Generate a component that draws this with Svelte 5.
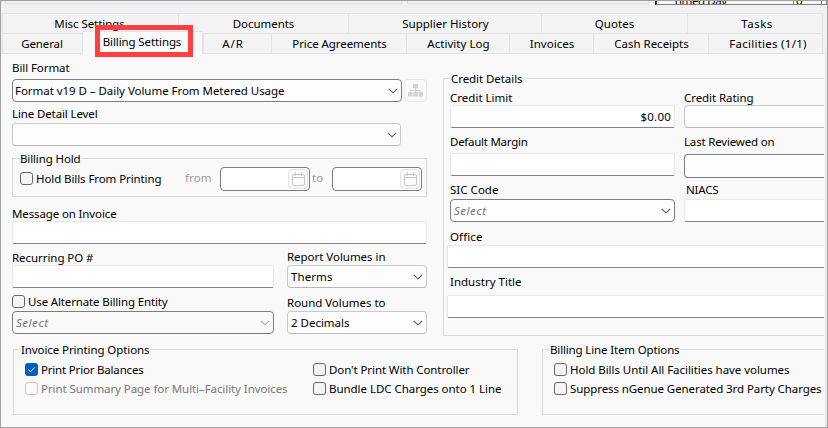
<script>
  const topTabs = [
    { text: 'Misc Settings', tw: 70, w: 176, shr: 2 },
    { text: 'Documents', tw: 61, w: 170 },
    { text: 'Supplier History', tw: 86, w: 193, shift: 1 },
    { text: 'Quotes', tw: 39, w: 146 },
    { text: 'Tasks', tw: 31, w: 136, shift: 4 }
  ];
  const tabs = [
    { text: 'General', tw: 41, w: 80, shr: 1 },
    { text: 'Billing Settings', tw: 78, w: 121, shr: 1, active: true },
    { text: 'A/R', tw: 21, w: 68, shr: 9 },
    { text: 'Price Agreements', tw: 94, w: 135, shift: 1 },
    { text: 'Activity Log', tw: 62, w: 103, shift: 1 },
    { text: 'Invoices', tw: 44, w: 84, shift: 1 },
    { text: 'Cash Receipts', tw: 74, w: 115, shift: 1 },
    { text: 'Facilities (1/1)', tw: 77, w: 115, shift: 5 }
  ];

  // Spreads the letters of a caption over a given width.
  function fit(node, width) {
    const natural = node.getBoundingClientRect().width;
    const spacing = (width + 0.5 - natural) / node.textContent.length;
    node.style.letterSpacing = spacing.toFixed(3) + 'px';
  }
</script>

{#snippet t(text, w)}<span class="t" use:fit={w}>{text}</span>{/snippet}

{#snippet chevron()}
  <svg class="chev" width="10" height="6" viewBox="0 0 10 6"><path d="M0.8 0.8 L5 4.8 L9.2 0.8" /></svg>
{/snippet}

{#snippet check(text, w, on = false, disabled = false)}
  <div class="check" class:disabled>
    <span class="box" class:on>
      {#if on}<svg width="13" height="13" viewBox="0 0 13 13"><path d="M3.3 6.7 L5.5 8.8 L9.8 4.4" /></svg>{/if}
    </span>
    {@render t(text, w)}
  </div>
{/snippet}

{#snippet date()}
  <div class="date">
    <span class="calbtn">
      <svg width="15" height="15" viewBox="0 0 15 15">
        <rect x="1.5" y="2.5" width="12" height="11" rx="1.5" />
        <path d="M1.5 5.5 H13.5 M4.5 0.5 V4 M10.5 0.5 V4" />
      </svg>
    </span>
  </div>
{/snippet}

<div class="window">
  <div class="strip">
    <div class="pane first"></div>
    <div class="pane second"></div>
    <div class="cut"><span class="cutlabel">Timed Day</span><span class="cutvalue">0</span></div>
  </div>

  <div class="tabs upper">
    {#each topTabs as tab}
      <div
        class="tab"
        style:width="{tab.w}px"
        style:padding-left="{tab.shift ?? 0}px"
        style:padding-right="{tab.shr ?? 0}px"
      >{@render t(tab.text, tab.tw)}</div>
    {/each}
  </div>
  <div class="tabs">
    {#each tabs as tab}
      <div
        class="tab"
        class:active={tab.active}
        style:width="{tab.w}px"
        style:padding-left="{tab.shift ?? 0}px"
        style:padding-right="{tab.shr ?? 0}px"
      >{@render t(tab.text, tab.tw)}</div>
    {/each}
  </div>
  <div class="marker"></div>

  <div class="body">
    <div class="upperform">
      <div class="left">
        <div class="label">{@render t('Bill Format', 57)}</div>
        <div class="formatrow">
          <div class="select strong">{@render t('Format v19 D – Daily Volume From Metered Usage', 269)}{@render chevron()}</div>
          <div class="treebtn">
            <svg width="15" height="13" viewBox="0 0 15 13">
              <path class="wire" d="M7.5 4 V8 M2.5 8.5 V6.5 H12.5 V8.5" />
              <path d="M5 0h5v4h-5z M0 8h4.5v4.5h-4.5z M5.3 8h4.5v4.5h-4.5z M10.5 8h4.5v4.5h-4.5z" />
            </svg>
          </div>
        </div>
        <div class="label detail">{@render t('Line Detail Level', 85)}</div>
        <div class="select level"><span></span>{@render chevron()}</div>

        <div class="group hold">
          <div class="legend">{@render t('Billing Hold', 60)}</div>
          <div class="holdrow">
            {@render check('Hold Bills From Printing', 125)}
            <span class="from">{@render t('from', 26)}</span>
            {@render date()}
            <span class="to">{@render t('to', 11)}</span>
            {@render date()}
          </div>
        </div>

        <div class="label message">{@render t('Message on Invoice', 104)}</div>
        <div class="input"></div>

        <div class="pair">
          <div class="po">
            <div class="label">{@render t('Recurring PO #', 81)}</div>
            <div class="input"></div>
            <div class="alt">{@render check('Use Alternate Billing Entity', 139)}</div>
            <div class="select strong off">{@render t('Select', 32)}{@render chevron()}</div>
          </div>
          <div class="volumes">
            <div class="label">{@render t('Report Volumes in', 98)}</div>
            <div class="select">{@render t('Therms', 41)}{@render chevron()}</div>
            <div class="label">{@render t('Round Volumes to', 98)}</div>
            <div class="select">{@render t('2 Decimals', 58)}{@render chevron()}</div>
          </div>
        </div>
      </div>

      <div class="group credit">
        <div class="legend">{@render t('Credit Details', 71)}</div>
        <div class="cols">
          <div class="c1">
            <div class="label">{@render t('Credit Limit', 62)}</div>
            <div class="input amount">{@render t('$0.00', 30)}</div>
            <div class="label after">{@render t('Default Margin', 77)}</div>
            <div class="input"></div>
            <div class="label sic">{@render t('SIC Code', 48)}</div>
            <div class="select strong place">{@render t('Select', 32)}{@render chevron()}</div>
          </div>
          <div class="c2">
            <div class="label">{@render t('Credit Rating', 69)}</div>
            <div class="select"></div>
            <div class="label reviewedlabel">{@render t('Last Reviewed on', 90)}</div>
            <div class="select strong reviewed"></div>
            <div class="label niacs">{@render t('NIACS', 32)}</div>
            <div class="input"></div>
          </div>
        </div>
        <div class="wide">
          <div class="label">{@render t('Office', 32)}</div>
          <div class="input"></div>
          <div class="label industry">{@render t('Industry Title', 71)}</div>
          <div class="input"></div>
        </div>
      </div>
    </div>

    <div class="options">
      <div class="group printing">
        <div class="legend">{@render t('Invoice Printing Options', 128)}</div>
        <div class="checks">
          <div class="stack first">
            {@render check('Print Prior Balances', 102, true)}
            {@render check('Print Summary Page for Multi–Facility Invoices', 246, false, true)}
          </div>
          <div class="stack">
            {@render check("Don't Print With Controller", 140)}
            {@render check('Bundle LDC Charges onto 1 Line', 172)}
          </div>
        </div>
      </div>
      <div class="group lineitems">
        <div class="legend">{@render t('Billing Line Item Options', 129)}</div>
        <div class="checks">
          <div class="stack">
            {@render check('Hold Bills Until All Facilities have volumes', 219)}
            {@render check('Suppress nGenue Generated 3rd Party Charges', 251)}
          </div>
        </div>
      </div>
    </div>
  </div>
</div>

<style>
  :global(body) { margin: 0; background: #f0f0f2; }
  .window, .window * { box-sizing: border-box; }
  .window {
    position: relative;
    width: 828px;
    height: 428px;
    overflow: hidden;
    border: 1px solid #a0a0a0;
    background: #f0f0f2;
    color: #000;
    font: 11.5px/14px 'Noto Sans', 'Open Sans', sans-serif;
  }
  .t { display: inline-block; white-space: pre; flex: none; }

  .strip { display: flex; height: 12px; padding-left: 4px; align-items: flex-start; }
  .pane { height: 3px; border: 1px solid #dcdcde; border-top: 0; background: #f2f2f4; }
  .pane.first { width: 397px; }
  .pane.second { width: 242px; margin-left: 5px; }
  .cut { display: flex; width: 172px; height: 4px; margin-left: 6px; overflow: hidden; border: 1px solid #808080; border-top: 0; border-left: 2px solid #222; background: #fafafa; line-height: 14px; }
  .cutlabel { width: 136px; padding-left: 16px; margin-top: -7px; height: 14px; letter-spacing: -0.4px; }
  .cutvalue { width: 29px; height: 14px; margin-top: -7px; padding-left: 2px; border-left: 1px solid #777; border-right: 1px solid #777; }

  .tabs { display: flex; width: 823px; height: 20px; padding-left: 1px; }
  .tab { flex: none; display: flex; justify-content: center; height: 20px; padding-top: 3px; border-top: 1px solid #e3e3e3; border-left: 1px solid #e3e3e3; background: #f3f3f3; }
  .tab:last-child { border-right: 1px solid #e3e3e3; }
  .tab.active { position: relative; height: 23px; margin-top: -2px; background: #f9f9f9; border-right: 1px solid #e3e3e3; z-index: 1; }
  .marker { position: absolute; left: 94px; top: 24px; width: 98px; height: 32px; border: 5px solid #ff4040; z-index: 2; }

  .body { width: 825px; height: 375px; padding: 7px 1px 0 11px; border-top: 1px solid #e3e3e3; border-right: 1px solid #e3e3e3; background: #f9f9f9; }
  .upperform { display: flex; width: 812px; height: 288px; }
  .left { flex: none; width: 415px; }
  .label { height: 14px; }
  .select, .input { display: flex; align-items: center; justify-content: space-between; height: 23px; }
  .select { padding: 0 3px; border: 1px solid #c9c9c9; border-bottom-color: #b8b8b8; border-radius: 4px; background: #fdfdfd; }
  .select.strong { border-color: #7d7d7d; }
  .input { border: 1px solid #e8e8e8; border-bottom-color: #828282; border-radius: 2px; background: #fff; }
  .chev { flex: none; fill: none; stroke: #555; stroke-width: 1.1; }

  .formatrow { display: flex; gap: 2px; margin-top: 4px; }
  .formatrow .select { width: 390px; padding-left: 2px; }
  .treebtn { display: flex; align-items: center; justify-content: center; width: 23px; height: 23px; border: 1px solid #e6e6e6; border-radius: 4px; background: #fafafa; }
  .treebtn svg { fill: #d2d2d2; }
  .treebtn .wire { fill: none; stroke: #d2d2d2; }
  .detail { margin-top: 5px; }
  .level { width: 389px; margin-top: 2px; }

  .group { border: 1px solid #d9d9d9; }
  .legend { width: fit-content; height: 14px; margin: -7px 0 0 7px; background: #f9f9f9; }
  .hold { height: 39px; margin-top: 12px; }
  .holdrow { display: flex; align-items: center; height: 24px; margin-top: 1px; padding-left: 7px; }
  .check { display: flex; align-items: center; gap: 3px; height: 13px; }
  .box { flex: none; display: block; width: 13px; height: 13px; border: 1px solid #666; border-radius: 3px; background: #f4f4f4; }
  .box.on { border: 0; background: #005fb8; }
  .box svg { display: block; fill: none; stroke: #e6f0fa; stroke-width: 1; }
  .disabled { color: #777; }
  .disabled .box { border-color: #c4c4c4; background: #fafafa; }
  .holdrow .check { width: 165px; margin-bottom: 1px; }
  .from, .to { height: 14px; margin-bottom: 2px; color: #9a9a9a; }
  .from { width: 35px; }
  .to { width: 22px; padding-left: 2px; }
  .date { display: flex; justify-content: flex-end; width: 90px; height: 24px; padding: 1px; border: 1px solid #7d7d7d; border-radius: 4px; background: #fff; }
  .calbtn { display: flex; align-items: center; justify-content: center; width: 20px; height: 20px; border: 1px solid #e3e3e3; border-radius: 4px; background: #fafafa; }
  .calbtn svg { fill: none; stroke: #c4c4c4; }

  .message { margin-top: 10px; }
  .pair { display: flex; gap: 13px; margin-top: 6px; }
  .po { width: 262px; padding-top: 1px; }
  .alt { margin: 7px 0 3px; }
  .off { background: #f9f9f9; color: #777; font-style: italic; }
  .off .chev { stroke: #aaa; }
  .place .t { color: #777; font-style: italic; }
  .volumes { width: 140px; }
  .volumes .select { margin-top: 1px; }
  .volumes .select .t { height: 14px; }
  .volumes .select + .label { margin-top: 8px; }

  .credit { flex: none; width: 381px; height: 258px; margin: 17px 0 0 16px; border-right: 0; }
  .cols { display: flex; gap: 9px; padding-left: 6px; margin-top: 5px; }
  .c1 { flex: none; width: 225px; }
  .c2 { flex: none; width: 140px; }
  .c2 .select, .c2 .input, .wide .input { border-right: 0; border-top-right-radius: 0; border-bottom-right-radius: 0; }
  .amount { justify-content: flex-end; padding-right: 3px; }
  .after { margin: 7px 0 4px; }
  .sic { margin: 7px 0 2px; }
  .reviewedlabel { margin: 7px 0 5px; }
  .reviewed { height: 24px; }
  .niacs { margin: 5px 0 2px; padding-left: 2px; }
  .wide { padding-left: 3px; margin-top: 8px; }
  .wide .label { padding-left: 3px; margin-bottom: 1px; }
  .wide .industry { margin: 7px 0 6px; }

  .options { display: flex; gap: 24px; width: 812px; padding-left: 1px; }
  .options .group { flex: none; height: 66px; }
  .printing { width: 505px; }
  .options .lineitems { width: 282px; border-right: 0; }
  .checks { display: flex; margin-top: 6px; padding-left: 11px; }
  .stack { display: flex; flex-direction: column; gap: 6px; }
  .stack.first { width: 288px; }
</style>
